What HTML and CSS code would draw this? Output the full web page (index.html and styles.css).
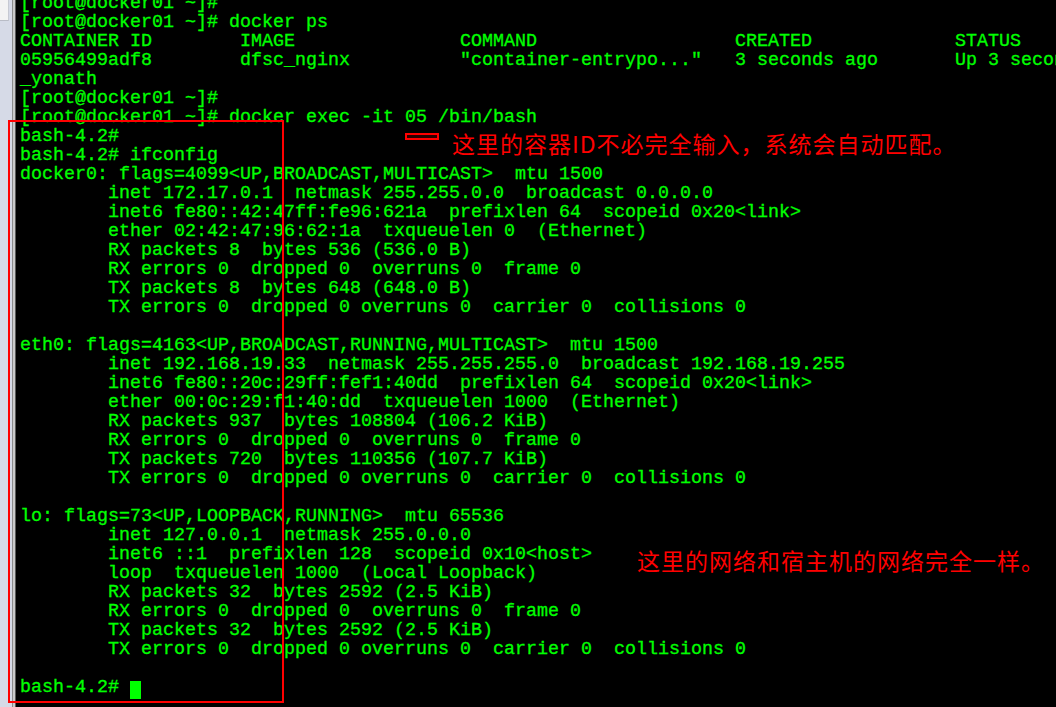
FILE: index.html
```html
<!DOCTYPE html>
<html lang="zh-CN">
<head>
<meta charset="utf-8">
<title>docker exec</title>
<link rel="stylesheet" href="styles.css">
</head>
<body>
<div class="window">
  <div class="frame">
    <div class="frame-tab"></div>
  </div>
  <div class="frame-edge"></div>
  <div class="terminal">
<pre class="screen">[root@docker01 ~]#
[root@docker01 ~]# docker ps
CONTAINER ID        IMAGE               COMMAND                  CREATED             STATUS              PORTS               NAMES
05956499adf8        dfsc_nginx          "container-entrypo..."   3 seconds ago       Up 3 seconds        80/tcp              pedantic
_yonath
[root@docker01 ~]#
[root@docker01 ~]# docker exec -it 05 /bin/bash
bash-4.2#
bash-4.2# ifconfig
docker0: flags=4099&lt;UP,BROADCAST,MULTICAST&gt;  mtu 1500
        inet 172.17.0.1  netmask 255.255.0.0  broadcast 0.0.0.0
        inet6 fe80::42:47ff:fe96:621a  prefixlen 64  scopeid 0x20&lt;link&gt;
        ether 02:42:47:96:62:1a  txqueuelen 0  (Ethernet)
        RX packets 8  bytes 536 (536.0 B)
        RX errors 0  dropped 0  overruns 0  frame 0
        TX packets 8  bytes 648 (648.0 B)
        TX errors 0  dropped 0 overruns 0  carrier 0  collisions 0

eth0: flags=4163&lt;UP,BROADCAST,RUNNING,MULTICAST&gt;  mtu 1500
        inet 192.168.19.33  netmask 255.255.255.0  broadcast 192.168.19.255
        inet6 fe80::20c:29ff:fef1:40dd  prefixlen 64  scopeid 0x20&lt;link&gt;
        ether 00:0c:29:f1:40:dd  txqueuelen 1000  (Ethernet)
        RX packets 937  bytes 108804 (106.2 KiB)
        RX errors 0  dropped 0  overruns 0  frame 0
        TX packets 720  bytes 110356 (107.7 KiB)
        TX errors 0  dropped 0 overruns 0  carrier 0  collisions 0

lo: flags=73&lt;UP,LOOPBACK,RUNNING&gt;  mtu 65536
        inet 127.0.0.1  netmask 255.0.0.0
        inet6 ::1  prefixlen 128  scopeid 0x10&lt;host&gt;
        loop  txqueuelen 1000  (Local Loopback)
        RX packets 32  bytes 2592 (2.5 KiB)
        RX errors 0  dropped 0  overruns 0  frame 0
        TX packets 32  bytes 2592 (2.5 KiB)
        TX errors 0  dropped 0 overruns 0  carrier 0  collisions 0

bash-4.2# <span class="cursor"> </span></pre>
  </div>
  <div class="mark-box"></div>
  <div class="mark-arrow"></div>
  <div class="note note-id">这里的容器ID不必完全输入，系统会自动匹配。</div>
  <div class="note note-net">这里的网络和宿主机的网络完全一样。</div>
</div>
</body>
</html>
```

FILE: styles.css
```css
html, body {
  margin: 0;
  padding: 0;
  background: #000;
  overflow: hidden;
}

.window {
  position: relative;
  display: flex;
  width: 1056px;
  height: 707px;
  overflow: hidden;
}

.frame {
  width: 12px;
  flex: none;
  background: #d6dae7;
}

.frame-tab {
  width: 8px;
  height: 20px;
  background: #f3f3f3;
  border-bottom: 1px solid #b9bcc6;
  border-right: 1px solid #c6c9d2;
}

.frame-edge {
  width: 2px;
  flex: none;
  border-left: 1px solid #8c8c8c;
  background: #c9c9c9;
  border-right: 1px solid #5a5a5a;
}

.terminal {
  flex: 1;
  background: #000;
  overflow: hidden;
}

.screen {
  margin: -6px 0 0 0;
  padding-left: 4px;
  font-family: "Liberation Mono", monospace;
  font-size: 18.333px;
  line-height: 19px;
  color: #00ff00;
  -webkit-text-stroke: 0.3px #00ff00;
  white-space: pre;
}

.cursor {
  display: inline-block;
  width: 11px;
  height: 18px;
  vertical-align: -3px;
  background: #00ff00;
}

.mark-box {
  position: absolute;
  left: 8px;
  top: 120px;
  width: 276px;
  height: 583px;
  box-sizing: border-box;
  border: 2px solid #ff0000;
}

.mark-arrow {
  position: absolute;
  left: 405px;
  top: 133px;
  width: 34px;
  height: 7px;
  box-sizing: border-box;
  border: 2px solid #ff0000;
  background: #2a0000;
}

.note {
  position: absolute;
  font-family: "Noto Sans CJK SC", sans-serif;
  font-size: 23px;
  line-height: 23px;
  letter-spacing: 1px;
  color: #ff0000;
  white-space: nowrap;
}

.note-id {
  left: 452px;
  top: 132px;
}

.note-net {
  left: 637px;
  top: 549px;
}
```
